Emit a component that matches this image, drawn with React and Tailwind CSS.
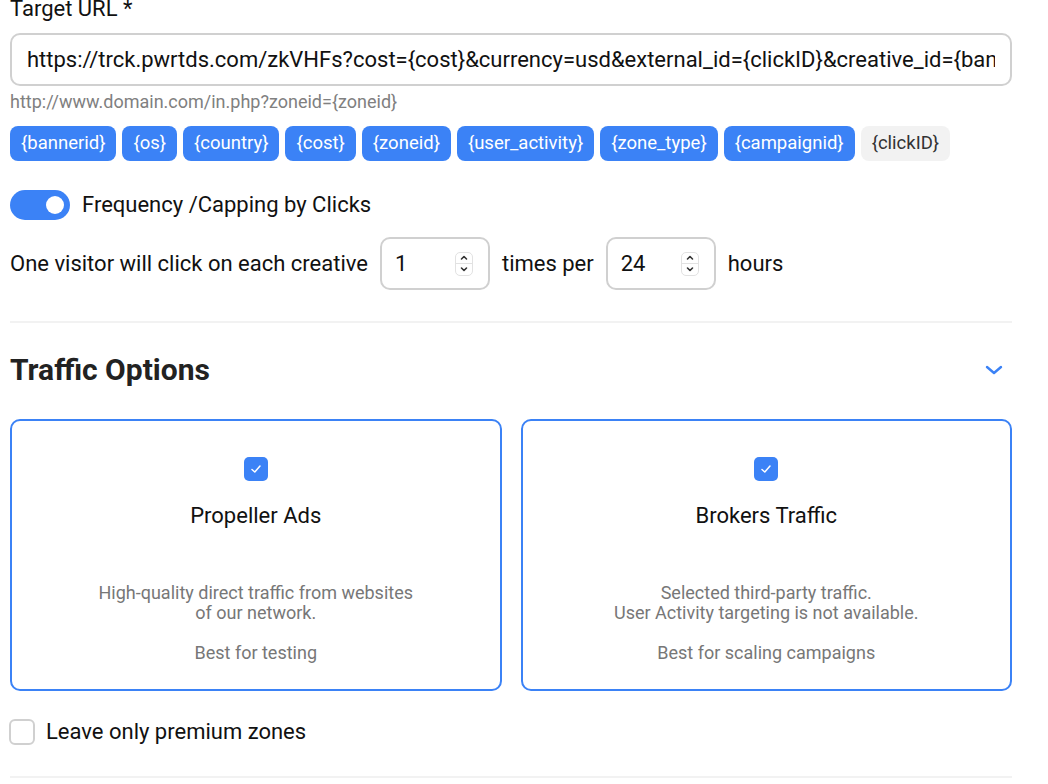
import React from "react";

const chips = ["{bannerid}", "{os}", "{country}", "{cost}", "{zoneid}", "{user_activity}", "{zone_type}", "{campaignid}"];

function Spinner() {
  return (
    <div className="flex h-[24px] w-[18px] flex-col rounded-[5px] border border-[#e2e2e2] bg-white">
      <div className="flex flex-1 items-center justify-center border-b border-[#e2e2e2]">
        <svg width="10" height="7" viewBox="0 0 10 7"><path d="M2.5 5 L5 2.5 L7.5 5" fill="none" stroke="#333" strokeWidth="1.6" strokeLinecap="round" strokeLinejoin="round" /></svg>
      </div>
      <div className="flex flex-1 items-center justify-center">
        <svg width="10" height="7" viewBox="0 0 10 7"><path d="M2.5 2 L5 4.5 L7.5 2" fill="none" stroke="#333" strokeWidth="1.6" strokeLinecap="round" strokeLinejoin="round" /></svg>
      </div>
    </div>
  );
}

function NumberBox({ value }) {
  return (
    <div className="flex h-[53px] w-[110px] items-center justify-between rounded-[10px] border-2 border-[#d0d0d0] pl-[13px] pr-[15px]">
      <span className="text-[22px] leading-[26px] text-[#111]">{value}</span>
      <Spinner />
    </div>
  );
}

function Check() {
  return (
    <div className="flex h-[24px] w-[24px] items-center justify-center rounded-[5px] bg-[#3b82f6]">
      <svg width="14" height="14" viewBox="0 0 14 14"><path d="M3 7.5 L5.8 10 L11 4" fill="none" stroke="white" strokeWidth="1.5" strokeLinecap="round" strokeLinejoin="round" /></svg>
    </div>
  );
}

function Card({ title, lines, best }) {
  return (
    <div className="flex h-[272px] flex-1 flex-col items-center rounded-[10px] border-2 border-[#3b82f6] pt-[36px]">
      <Check />
      <div className="mt-[22px] text-[22px] leading-[26px] text-[#111]">{title}</div>
      <div className="mt-[54px] text-center text-[18px] leading-[20px] text-[#777]">
        {lines.map((l) => (
          <div key={l}>{l}</div>
        ))}
      </div>
      <div className="mt-[20px] text-[18px] leading-[20px] text-[#777]">{best}</div>
    </div>
  );
}

export default function App() {
  return (
    <div className="h-[784px] w-[1048px] overflow-hidden bg-white text-[#111]" style={{ fontFamily: "Roboto, 'Noto Sans', sans-serif" }}>
      <div className="ml-[10px] w-[1002px]">
        <div className="-mt-[4px] text-[22px] leading-[26px]">Target URL *</div>
        <div className="mt-[11px] flex h-[53px] items-center rounded-[10px] border-2 border-[#d0d0d0] px-[15px]">
          <div className="flex-1 overflow-hidden whitespace-nowrap text-[22px] leading-[26px] text-[#111]">
            https://trck.pwrtds.com/zkVHFs?cost={"{cost}"}&amp;currency=usd&amp;external_id={"{clickID}"}&amp;creative_id={"{bannerid}"}&amp;zone={"{zoneid}"}
          </div>
        </div>
        <div className="mt-[6px] text-[18px] leading-[20px] text-[#808080]">http://www.domain.com/in.php?zoneid={"{zoneid}"}</div>
        <div className="mt-[14px] flex gap-[6px]">
          {chips.map((c) => (
            <div key={c} className="flex h-[35px] items-center rounded-[8px] bg-[#3b82f6] px-[11px] text-[18.5px] text-white">{c}</div>
          ))}
          <div className="flex h-[35px] items-center rounded-[8px] bg-[#f2f2f2] px-[11px] text-[18.5px] text-[#333]">{"{clickID}"}</div>
        </div>
        <div className="mt-[29px] flex items-center gap-[12px]">
          <div className="flex h-[30px] w-[60px] items-center justify-end rounded-full bg-[#3b82f6] pr-[6px]">
            <div className="h-[18px] w-[18px] rounded-full bg-white" />
          </div>
          <span className="text-[22px] leading-[26px]">Frequency /Capping by Clicks</span>
        </div>
        <div className="mt-[17px] flex items-center gap-[12px] text-[22px] leading-[26px]">
          <span>One visitor will click on each creative</span>
          <NumberBox value="1" />
          <span>times per</span>
          <NumberBox value="24" />
          <span>hours</span>
        </div>
        <div className="mt-[31px] h-[2px] bg-[#f2f2f2]" />
        <div className="mt-[28px] flex items-center justify-between">
          <h2 className="text-[30px] font-bold leading-[38px] text-[#222]">Traffic Options</h2>
          <svg className="mr-[8px]" width="20" height="14" viewBox="0 0 20 14"><path d="M3 4 L10 10 L17 4" fill="none" stroke="#3b82f6" strokeWidth="2.4" strokeLinecap="round" strokeLinejoin="round" /></svg>
        </div>
        <div className="mt-[30px] flex gap-[19px]">
          <Card title="Propeller Ads" lines={["High-quality direct traffic from websites", "of our network."]} best="Best for testing" />
          <Card title="Brokers Traffic" lines={["Selected third-party traffic.", "User Activity targeting is not available."]} best="Best for scaling campaigns" />
        </div>
        <div className="mt-[28px] flex items-center gap-[11px]">
          <div className="-ml-[1px] h-[26px] w-[26px] rounded-[6px] border-2 border-[#d0d0d0]" />
          <span className="text-[22px] leading-[26px]">Leave only premium zones</span>
        </div>
        <div className="mt-[31px] h-[2px] bg-[#f2f2f2]" />
      </div>
    </div>
  );
}
